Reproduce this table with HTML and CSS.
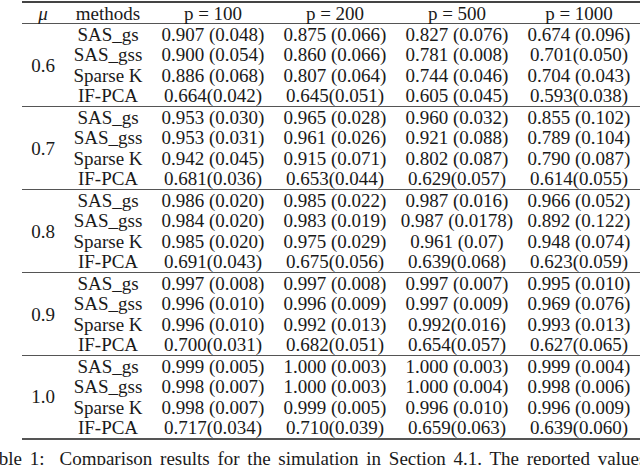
FILE: index.html
```html
<!DOCTYPE html>
<html>
<head>
<meta charset="utf-8">
<link rel="stylesheet" href="styles.css">
</head>
<body>
<table class="res">
  <colgroup>
    <col class="c-mu"><col class="c-m"><col class="c-n"><col class="c-n"><col class="c-n"><col class="c-n">
  </colgroup>
  <thead>
    <tr class="head"><th class="mu">μ</th><th>methods</th><th>p = 100</th><th>p = 200</th><th>p = 500</th><th>p = 1000</th></tr>
  </thead>
  <tbody>
    <tr class="first"><td rowspan="4">0.6</td><td>SAS_gs</td><td>0.907 (0.048)</td><td>0.875 (0.066)</td><td>0.827 (0.076)</td><td>0.674 (0.096)</td></tr>
    <tr><td>SAS_gss</td><td>0.900 (0.054)</td><td>0.860 (0.066)</td><td>0.781 (0.008)</td><td>0.701(0.050)</td></tr>
    <tr><td>Sparse K</td><td>0.886 (0.068)</td><td>0.807 (0.064)</td><td>0.744 (0.046)</td><td>0.704 (0.043)</td></tr>
    <tr><td>IF-PCA</td><td>0.664(0.042)</td><td>0.645(0.051)</td><td>0.605 (0.045)</td><td>0.593(0.038)</td></tr>

    <tr class="first"><td rowspan="4">0.7</td><td>SAS_gs</td><td>0.953 (0.030)</td><td>0.965 (0.028)</td><td>0.960 (0.032)</td><td>0.855 (0.102)</td></tr>
    <tr><td>SAS_gss</td><td>0.953 (0.031)</td><td>0.961 (0.026)</td><td>0.921 (0.088)</td><td>0.789 (0.104)</td></tr>
    <tr><td>Sparse K</td><td>0.942 (0.045)</td><td>0.915 (0.071)</td><td>0.802 (0.087)</td><td>0.790 (0.087)</td></tr>
    <tr><td>IF-PCA</td><td>0.681(0.036)</td><td>0.653(0.044)</td><td>0.629(0.057)</td><td>0.614(0.055)</td></tr>

    <tr class="first"><td rowspan="4">0.8</td><td>SAS_gs</td><td>0.986 (0.020)</td><td>0.985 (0.022)</td><td>0.987 (0.016)</td><td>0.966 (0.052)</td></tr>
    <tr><td>SAS_gss</td><td>0.984 (0.020)</td><td>0.983 (0.019)</td><td>0.987 (0.0178)</td><td>0.892 (0.122)</td></tr>
    <tr><td>Sparse K</td><td>0.985 (0.020)</td><td>0.975 (0.029)</td><td>0.961 (0.07)</td><td>0.948 (0.074)</td></tr>
    <tr><td>IF-PCA</td><td>0.691(0.043)</td><td>0.675(0.056)</td><td>0.639(0.068)</td><td>0.623(0.059)</td></tr>

    <tr class="first"><td rowspan="4">0.9</td><td>SAS_gs</td><td>0.997 (0.008)</td><td>0.997 (0.008)</td><td>0.997 (0.007)</td><td>0.995 (0.010)</td></tr>
    <tr><td>SAS_gss</td><td>0.996 (0.010)</td><td>0.996 (0.009)</td><td>0.997 (0.009)</td><td>0.969 (0.076)</td></tr>
    <tr><td>Sparse K</td><td>0.996 (0.010)</td><td>0.992 (0.013)</td><td>0.992(0.016)</td><td>0.993 (0.013)</td></tr>
    <tr><td>IF-PCA</td><td>0.700(0.031)</td><td>0.682(0.051)</td><td>0.654(0.057)</td><td>0.627(0.065)</td></tr>

    <tr class="first last"><td rowspan="4">1.0</td><td>SAS_gs</td><td>0.999 (0.005)</td><td>1.000 (0.003)</td><td>1.000 (0.003)</td><td>0.999 (0.004)</td></tr>
    <tr><td>SAS_gss</td><td>0.998 (0.007)</td><td>1.000 (0.003)</td><td>1.000 (0.004)</td><td>0.998 (0.006)</td></tr>
    <tr><td>Sparse K</td><td>0.998 (0.007)</td><td>0.999 (0.005)</td><td>0.996 (0.010)</td><td>0.996 (0.009)</td></tr>
    <tr class="end"><td>IF-PCA</td><td>0.717(0.034)</td><td>0.710(0.039)</td><td>0.659(0.063)</td><td>0.639(0.060)</td></tr>
  </tbody>
</table>
<p class="caption"><span class="lbl">Table 1:</span>Comparison results for the simulation in Section 4.1. The reported values are</p>
</body>
</html>
```
FILE: styles.css
```css
html, body {
  margin: 0;
  padding: 0;
  background: #ffffff;
  overflow: hidden;
}
body {
  width: 640px;
  height: 465px;
  font-family: "Liberation Serif", "DejaVu Serif", serif;
  font-size: 19px;
  color: #1a1a1a;
}
.res {
  margin-left: 22px;
  margin-top: 1px;
  width: 618px;
  border-collapse: collapse;
  table-layout: fixed;
  border-top: 2px solid #444;
  border-bottom: 2px solid #555;
}
.c-mu { width: 42px; }
.c-m { width: 88px; }
.c-n { width: 122px; }
.res th, .res td {
  padding: 0;
  text-align: center;
  vertical-align: middle;
  font-weight: normal;
  line-height: 1;
  white-space: nowrap;
}
.head th {
  height: 20px;
  border-bottom: 1px solid #555;
}
.res tbody tr { height: 20.75px; }
.res tbody tr.first td { border-top: 1px solid #555; }
.mu { font-style: italic; }
.caption {
  margin: 9px 0 0 -20px;
  white-space: nowrap;
  font-size: 19px;
  line-height: 1;
  word-spacing: 3px;
}
.lbl { margin-right: 15px; }
```
